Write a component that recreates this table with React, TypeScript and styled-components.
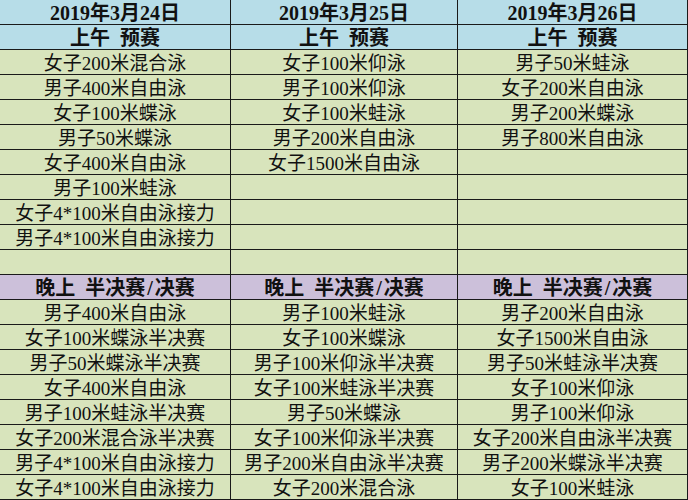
import React from 'react'
import styled, { createGlobalStyle } from 'styled-components'

type Tone = 'blue' | 'green' | 'purple'

const tones: Record<Tone, string> = {
  blue: '#b7dde8',
  green: '#d8e4bc',
  purple: '#ccc0da',
}

const days = ['2019年3月24日', '2019年3月25日', '2019年3月26日']

const morning = [
  ['女子200米混合泳', '女子100米仰泳', '男子50米蛙泳'],
  ['男子400米自由泳', '男子100米仰泳', '女子200米自由泳'],
  ['女子100米蝶泳', '女子100米蛙泳', '男子200米蝶泳'],
  ['男子50米蝶泳', '男子200米自由泳', '男子800米自由泳'],
  ['女子400米自由泳', '女子1500米自由泳', ''],
  ['男子100米蛙泳', '', ''],
  ['女子4*100米自由泳接力', '', ''],
  ['男子4*100米自由泳接力', '', ''],
  ['', '', ''],
]

const evening = [
  ['男子400米自由泳', '男子100米蛙泳', '男子200米自由泳'],
  ['女子100米蝶泳半决赛', '女子100米蝶泳', '女子1500米自由泳'],
  ['男子50米蝶泳半决赛', '男子100米仰泳半决赛', '男子50米蛙泳半决赛'],
  ['女子400米自由泳', '女子100米蛙泳半决赛', '女子100米仰泳'],
  ['男子100米蛙泳半决赛', '男子50米蝶泳', '男子100米仰泳'],
  ['女子200米混合泳半决赛', '女子100米仰泳半决赛', '女子200米自由泳半决赛'],
  ['男子4*100米自由泳接力', '男子200米自由泳半决赛', '男子200米蝶泳半决赛'],
  ['女子4*100米自由泳接力', '女子200米混合泳', '女子100米蛙泳'],
]

function App() {
  return (
    <>
      <GlobalStyle />
      <Sheet>
        {days.map((d) => (
          <Cell key={d} tone="blue" bold>
            {d}
          </Cell>
        ))}
        {days.map((d) => (
          <Cell key={d + 'am'} tone="blue" bold>
            上午&nbsp;&nbsp;预赛
          </Cell>
        ))}
        {morning.flat().map((t, i) => (
          <Cell key={'m' + i} tone="green">
            {t}
          </Cell>
        ))}
        {days.map((d) => (
          <Cell key={d + 'pm'} tone="purple" bold>
            晚上&nbsp;&nbsp;半决赛<Slash>/</Slash>决赛
          </Cell>
        ))}
        {evening.flat().map((t, i) => (
          <Cell key={'e' + i} tone="green">
            {t}
          </Cell>
        ))}
      </Sheet>
    </>
  )
}

export default App

const GlobalStyle = createGlobalStyle`
  body {
    margin: 0;
    background: #ffffff;
  }
`

const Sheet = styled.div`
  display: grid;
  grid-template-columns: 231px 227px 230px;
  grid-auto-rows: 25px;
  width: 688px;
  height: 500px;
  overflow: hidden;
  font-family: 'Liberation Serif', 'Noto Sans CJK SC', serif;
  color: #111;
`

const Cell = styled.div<{ tone: Tone; bold?: boolean }>`
  background: ${({ tone }) => tones[tone]};
  border-right: 1px solid #1a1a1a;
  border-bottom: 1px solid #1a1a1a;
  display: flex;
  align-items: center;
  justify-content: center;
  white-space: pre;
  line-height: 24px;
  padding-top: ${({ bold }) => (bold ? '1px' : '3px')};
  font-size: ${({ bold }) => (bold ? '20px' : '19px')};
  font-weight: ${({ bold }) => (bold ? 700 : 400)};
`

const Slash = styled.span`
  margin: 0 2px;
`
